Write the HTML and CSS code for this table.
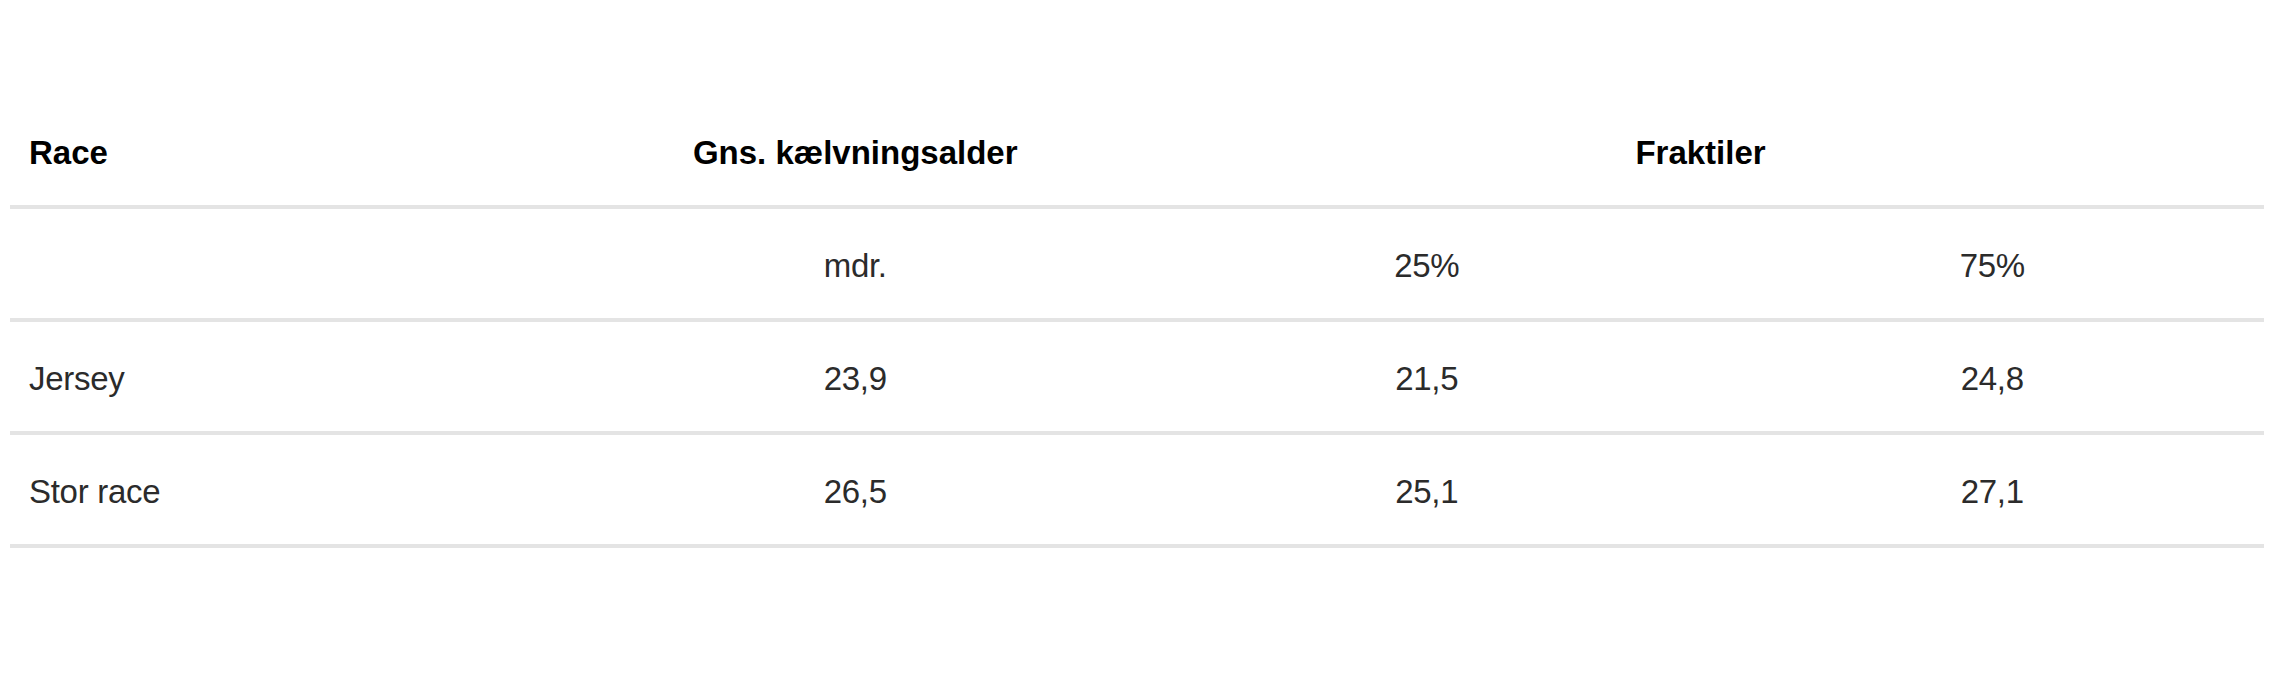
FILE: index.html
```html
<!DOCTYPE html>
<html lang="da">
<head>
<meta charset="utf-8">
<title>Kælvningsalder</title>
<link rel="stylesheet" href="styles.css">
</head>
<body>
<div class="wrap">
  <table class="data">
    <colgroup>
      <col class="c1"><col class="c2"><col class="c3"><col class="c4">
    </colgroup>
    <thead>
      <tr class="head">
        <th class="left">Race</th>
        <th>Gns. kælvningsalder</th>
        <th colspan="2">Fraktiler</th>
      </tr>
    </thead>
    <tbody>
      <tr>
        <td class="left"></td>
        <td>mdr.</td>
        <td class="q1">25%</td>
        <td class="q3">75%</td>
      </tr>
      <tr>
        <td class="left">Jersey</td>
        <td>23,9</td>
        <td class="q1">21,5</td>
        <td class="q3">24,8</td>
      </tr>
      <tr>
        <td class="left">Stor race</td>
        <td>26,5</td>
        <td class="q1">25,1</td>
        <td class="q3">27,1</td>
      </tr>
    </tbody>
  </table>
</div>
</body>
</html>
```

FILE: styles.css
```css
html, body {
  margin: 0;
  padding: 0;
  background: #ffffff;
}

body {
  font-family: "Liberation Sans", Arial, Helvetica, sans-serif;
  color: #2b2b2b;
}

.wrap {
  padding: 96px 12px 0 10px;
}

.data {
  width: 100%;
  border-collapse: collapse;
  table-layout: fixed;
}

.data th,
.data td {
  height: 106px;
  padding: 3px 16px 0;
  font-size: 33px;
  line-height: 1;
  text-align: center;
  vertical-align: middle;
  border-bottom: 4px solid #e4e4e4;
}

.data th {
  font-weight: bold;
  color: #000000;
}

.data td {
  font-weight: normal;
  color: #2b2b2b;
  letter-spacing: -0.3px;
}

.data .left {
  text-align: left;
  padding-left: 19px;
}

.data .q1 {
  padding-left: 32px;
}

.data .q3 {
  padding-left: 36px;
}
```
